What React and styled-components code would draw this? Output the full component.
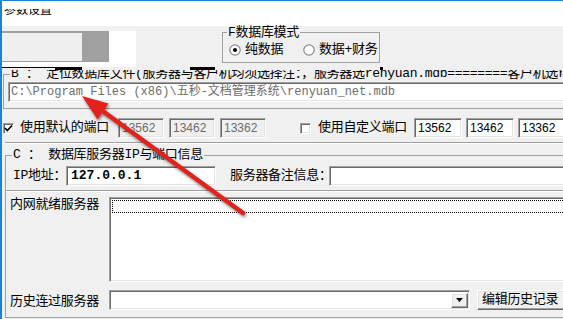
import React from 'react'
import styled, { createGlobalStyle } from 'styled-components'

const Global = createGlobalStyle`
  body {
    margin: 0;
    background: #fff;
    font-family: "Liberation Mono", "Noto Sans CJK SC", monospace;
    font-size: 13px;
    letter-spacing: -0.3px;
    color: #000;
  }
  * { box-sizing: border-box; }
`

const Window = styled.div`
  position: relative;
  width: 563px;
  height: 319px;
  overflow: hidden;
  border-top: 1px solid #1883d7;
  border-left: 2px solid #1883d7;
  background: #f0f0f0;
  display: flex;
  flex-direction: column;
`

const TitleBar = styled.div`
  height: 25px;
  flex: none;
  background: #fff;
  padding-left: 2px;
`

const TitleText = styled.div`
  margin-top: 2px;
  font-family: "Noto Sans CJK SC", sans-serif;
  font-size: 12px;
  line-height: 12px;
  letter-spacing: 0;
  clip-path: inset(6px 0 0 0);
`

const TopPanel = styled.div`
  height: 41px;
  flex: none;
  display: flex;
  align-items: flex-start;
`

const Strip = styled.div`
  width: 134px;
  height: 36px;
  margin-top: 5px;
  background: #fff;
  display: flex;
  align-items: flex-start;
`

const SunkBox = styled.div`
  width: 80px;
  height: 31px;
  background: #efefef;
  border-top: 2px solid #a0a0a0;
  border-bottom: 1px solid #a0a0a0;
`

const GrayBlock = styled.div`
  width: 27px;
  height: 31px;
  background: #a0a0a0;
`

const ModeSet = styled.fieldset`
  margin: 0 0 0 86px;
  padding: 0;
  width: 158px;
  height: 37px;
  border: 1px solid #a0a0a0;
  min-inline-size: 0;
  overflow: visible;
`

const ModeLegend = styled.legend`
  margin-left: 4px;
  padding: 0 1px;
  line-height: 13px;
  font-size: 13px;
`

const RadioRow = styled.div`
  display: flex;
  align-items: center;
  height: 14px;
  margin-top: 4px;
  padding-left: 6px;
  line-height: 14px;
  white-space: nowrap;
`

const RadioItem = styled.label`
  flex: none;
  display: flex;
  align-items: center;
  gap: 4px;
  margin-right: ${p => p.$gap || 0}px;
`

const Smudge = styled.div`
  height: 3px;
  margin-bottom: -3px;
  flex: none;
  display: flex;
  align-items: flex-start;
  position: relative;
  z-index: 1;
`

const SmudgeBit = styled.span`
  display: block;
  background: #000;
  width: ${p => p.$w}px;
  height: ${p => p.$h}px;
  margin-left: ${p => p.$ml || 0}px;
`

const Group = styled.div`
  flex: none;
  margin: ${p => p.$mt}px 0 0 ${p => p.$ml}px;
  border: 1px solid #a0a0a0;
  border-right: none;
  padding-bottom: ${p => p.$pb}px;
`

const Legend = styled.div`
  margin: -8px 0 0 6px;
  padding: 0 1px;
  width: fit-content;
  max-width: 552px;
  overflow: hidden;
  height: 14px;
  line-height: 14px;
  white-space: nowrap;
  background: #f0f0f0;
  clip-path: ${p => (p.$cut ? 'inset(3px 0 0 0)' : 'none')};
`

const sunken = `
  border: 1px solid;
  border-color: #a0a0a0 #fff #fff #a0a0a0;
  box-shadow: inset 1px 1px #696969, inset -1px -1px #e3e3e3;
`

const PathBox = styled.div`
  ${sunken}
  margin: 1px 0 0 4px;
  width: 560px;
  height: 20px;
  background: #fff;
  padding-left: 2px;
  font-size: 12px;
  line-height: 18px;
  letter-spacing: 0;
  color: #6d6d6d;
  white-space: nowrap;
`

const PortRow = styled.div`
  flex: none;
  display: flex;
  align-items: center;
  height: 20px;
  margin-top: 9px;
`

const Check = styled.span`
  ${sunken}
  width: 11px;
  height: 11px;
  flex: none;
  background: #fff;
  margin-left: ${p => p.$ml}px;
  display: flex;
  align-items: center;
  justify-content: center;
`

const Text = styled.span`
  flex: none;
  width: ${p => (p.$w ? `${p.$w}px` : 'auto')};
  margin-left: ${p => p.$ml || 0}px;
  line-height: 16px;
  white-space: nowrap;
`

const PortBox = styled.div`
  ${sunken}
  flex: none;
  width: ${p => p.$w}px;
  height: 20px;
  margin-left: ${p => p.$ml}px;
  padding-left: 3px;
  background: ${p => (p.$off ? '#f0f0f0' : '#fff')};
  color: ${p => (p.$off ? '#6d6d6d' : '#000')};
  font-family: "Liberation Sans", sans-serif;
  font-size: 12px;
  letter-spacing: 0;
  line-height: 18px;
`

const Rule = styled.div`
  flex: none;
  margin: ${p => p.$mt}px 0 0 ${p => p.$ml}px;
  height: 2px;
  border-top: 1px solid #a0a0a0;
  border-bottom: 1px solid #fff;
`

const Row = styled.div`
  display: flex;
  align-items: ${p => p.$align || 'center'};
  margin-top: ${p => p.$mt}px;
  padding-left: ${p => p.$pl}px;
`

const Field = styled.div`
  ${sunken}
  flex: none;
  width: ${p => p.$w}px;
  height: ${p => p.$h || 20}px;
  background: #fff;
  padding-left: 4px;
  line-height: 18px;
`

const IpText = styled.span`
  font-weight: bold;
  font-size: 13px;
  letter-spacing: 0;
`

const FocusRect = styled.div`
  margin: 1px 0 0 1px;
  height: 13px;
  border: 1px dotted #000;
  border-right: none;
`

const ListBox = styled.div`
  ${sunken}
  flex: none;
  width: 460px;
  height: 85px;
  background: #fff;
  padding: 1px;
`

const Combo = styled.div`
  ${sunken}
  flex: none;
  width: 361px;
  height: 20px;
  background: #fff;
  display: flex;
  align-items: center;
  justify-content: flex-end;
  padding-right: 1px;
`

const raised = `
  border: 1px solid;
  border-color: #fff #696969 #696969 #fff;
  box-shadow: inset -1px -1px #a0a0a0, inset 1px 1px #e3e3e3;
  background: #f0f0f0;
`

const DropBtn = styled.div`
  ${raised}
  width: 17px;
  height: 15px;
  display: flex;
  align-items: center;
  justify-content: center;
`

const Button = styled.div`
  ${raised}
  flex: none;
  width: 90px;
  height: 20px;
  margin-left: 7px;
  padding-left: 4px;
  line-height: 18px;
  white-space: nowrap;
`

const Overlay = styled.svg`
  position: absolute;
  top: -1px;
  left: -2px;
  width: 563px;
  height: 319px;
  pointer-events: none;
  filter: drop-shadow(1px 2px 1.5px rgba(0, 0, 0, 0.45));
`

const Radio = ({ on }) => (
  <svg width="12" height="12" viewBox="0 0 12 12">
    <circle cx="6" cy="6" r="5.2" fill="#fff" stroke="#8a8a8a" strokeWidth="1.2" />
    {on && <circle cx="6" cy="6" r="2" fill="#000" />}
  </svg>
)

const Tick = () => (
  <svg width="9" height="9" viewBox="0 0 9 9">
    <path d="M1 4 L3.3 6.5 L8 1.5" fill="none" stroke="#000" strokeWidth="1.7" />
  </svg>
)

export default function App() {
  return (
    <>
      <Global />
      <Window>
        <TitleBar>
          <TitleText>参数设置</TitleText>
        </TitleBar>

        <TopPanel>
          <Strip>
            <SunkBox />
            <GrayBlock />
          </Strip>
          <ModeSet>
            <ModeLegend>F数据库模式</ModeLegend>
            <RadioRow>
              <RadioItem $gap={20}><Radio on />纯数据</RadioItem>
              <RadioItem><Radio />数据+财务</RadioItem>
            </RadioRow>
          </ModeSet>
        </TopPanel>

        <Smudge>
          <SmudgeBit $w={53} $h={1} />
          <SmudgeBit $w={27} $h={3} />
          <SmudgeBit $w={25} $h={3} $ml={108} />
          <SmudgeBit $w={3} $h={3} $ml={165} />
        </Smudge>

        <Group $mt={7} $ml={1} $pb={6}>
          <Legend $cut>
            B ： 定位数据库文件(服务器与客户机均须选择注：，服务器选renyuan.mdb========客户机选re
          </Legend>
          <PathBox>C:\Program Files (x86)\五秒-文档管理系统\renyuan_net.mdb</PathBox>
        </Group>

        <PortRow>
          <Check $ml={1}><Tick /></Check>
          <Text $ml={6} $w={98}>使用默认的端口</Text>
          <PortBox $off $w={46} $ml={0}>13562</PortBox>
          <PortBox $off $w={46} $ml={5}>13462</PortBox>
          <PortBox $off $w={46} $ml={5}>13362</PortBox>
          <Check $ml={34} />
          <Text $ml={7} $w={96}>使用自定义端口</Text>
          <PortBox $w={48} $ml={0}>13562</PortBox>
          <PortBox $w={48} $ml={4}>13462</PortBox>
          <PortBox $w={48} $ml={4}>13362</PortBox>
        </PortRow>

        <Rule $mt={4} $ml={3} />

        <Group $mt={11} $ml={3} $pb={7}>
          <Legend>C ： 数据库服务器IP与端口信息</Legend>

          <Row $mt={4} $pl={7}>
            <Text $w={53}>IP地址：</Text>
            <Field $w={150}><IpText>127.0.0.1</IpText></Field>
            <Text $ml={14} $w={99}>服务器备注信息：</Text>
            <Field $w={240} />
          </Row>

          <Rule $mt={4} $ml={0} />

          <Row $mt={5} $pl={4} $align="flex-start">
            <Text $w={99}>内网就绪服务器</Text>
            <ListBox>
              <FocusRect />
            </ListBox>
          </Row>

          <Row $mt={8} $pl={4} $align="flex-end">
            <Text $w={99}>历史连过服务器</Text>
            <Combo>
              <DropBtn>
                <svg width="7" height="4" viewBox="0 0 7 4">
                  <path d="M0 0 H7 L3.5 4 Z" fill="#000" />
                </svg>
              </DropBtn>
            </Combo>
            <Button>编辑历史记录</Button>
          </Row>
        </Group>

        <Overlay viewBox="0 0 563 319">
          <line x1="102" y1="110.5" x2="243" y2="213" stroke="#e3221c" strokeWidth="4.5" strokeLinecap="round" />
          <polygon points="82,96 97.5,119.5 108.5,103.5" fill="#e3221c" />
        </Overlay>
      </Window>
    </>
  )
}
